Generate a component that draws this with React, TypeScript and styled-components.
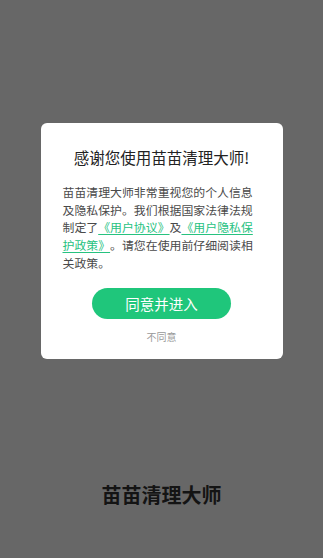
import React from "react";
import styled, { createGlobalStyle } from "styled-components";

const Global = createGlobalStyle`
  html, body { margin: 0; padding: 0; background: #676767; }
  body { font-family: "Noto Sans CJK SC", "Noto Sans", sans-serif; }
  * { box-sizing: border-box; }
`;

const Page = styled.div`
  height: 558px;
  display: flex;
  flex-direction: column;
  align-items: center;
  padding-top: 123px;
  background: #676767;
`;

const Dialog = styled.div`
  width: 242px;
  background: #ffffff;
  border-radius: 6px;
  padding: 23px 22px 15px;
  display: flex;
  flex-direction: column;
  align-items: center;
`;

const Title = styled.div`
  font-size: 15.5px;
  line-height: 22px;
  color: #222;
  font-weight: 400;
  text-align: center;
`;

const Body = styled.p`
  margin: 15px 0 0;
  width: 100%;
  font-size: 11.9px;
  line-height: 17.7px;
  color: #4a4a4a;
  text-align: left;
  text-spacing-trim: space-all;
  font-kerning: none;
  font-feature-settings: "palt" 0, "halt" 0;
`;

const Link = styled.span`
  color: #27c27f;
  text-decoration: underline;
  text-underline-offset: 2px;
`;

const AgreeButton = styled.button`
  margin-top: 16px;
  width: 139px;
  height: 31px;
  border: none;
  border-radius: 16px;
  background: #1fc67b;
  color: #fff;
  font-family: inherit;
  font-size: 14.5px;
  display: flex;
  align-items: center;
  justify-content: center;
  padding: 0;
`;

const Decline = styled.div`
  margin-top: 11px;
  font-size: 10px;
  line-height: 14px;
  color: #999;
`;

const Spacer = styled.div`
  flex: 1;
`;

const AppName = styled.div`
  margin-bottom: 49px;
  font-size: 20px;
  line-height: 28px;
  font-weight: 700;
  color: #141414;
`;

export default function App() {
  return (
    <>
      <Global />
      <Page>
        <Dialog>
          <Title>感谢您使用苗苗清理大师!</Title>
          <Body>
            苗苗清理大师非常重视您的个人信息及隐私保护。我们根据国家法律法规制定了
            <Link>《用户协议》</Link>及<Link>《用户隐私保护政策》</Link>
            。请您在使用前仔细阅读相关政策。
          </Body>
          <AgreeButton>同意并进入</AgreeButton>
          <Decline>不同意</Decline>
        </Dialog>
        <Spacer />
        <AppName>苗苗清理大师</AppName>
      </Page>
    </>
  );
}
